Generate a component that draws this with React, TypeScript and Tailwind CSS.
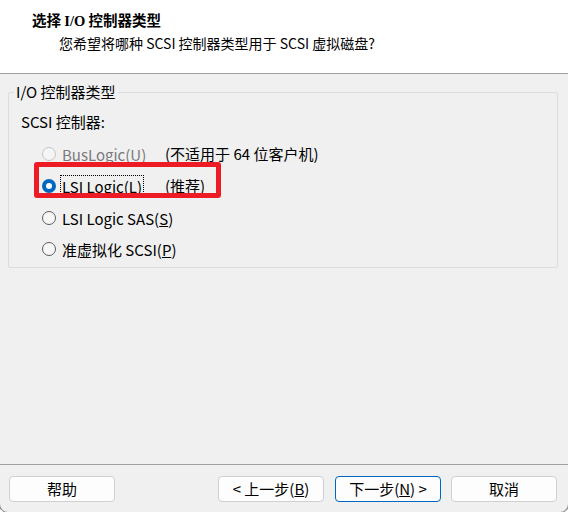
import type { ReactNode } from "react";

const font = "font-['Noto_Sans_CJK_SC','Noto_Sans',sans-serif]";

type Option = {
  label: ReactNode;
  note?: string;
  checked?: boolean;
  disabled?: boolean;
  focused?: boolean;
  rowClass: string;
};

const options: Option[] = [
  {
    label: (
      <>
        BusLogic(<span className="underline">U</span>)
      </>
    ),
    note: "(不适用于 64 位客户机)",
    disabled: true,
    rowClass: "h-8",
  },
  {
    label: (
      <>
        LSI Logic(<span className="underline">L</span>)
      </>
    ),
    note: "(推荐)",
    checked: true,
    focused: true,
    rowClass: "h-8",
  },
  {
    label: (
      <>
        LSI Logic SAS(<span className="underline">S</span>)
      </>
    ),
    rowClass: "h-8",
  },
  {
    label: (
      <>
        准虚拟化 SCSI(<span className="underline">P</span>)
      </>
    ),
    rowClass: "h-[30px]",
  },
];

function Radio({ checked, disabled }: { checked?: boolean; disabled?: boolean }) {
  if (checked) {
    return (
      <span className="flex h-[14px] w-[14px] shrink-0 items-center justify-center rounded-full bg-[#0067c0]">
        <span className="h-[6px] w-[6px] rounded-full bg-white" />
      </span>
    );
  }
  return (
    <span
      className={
        disabled
          ? "h-[14px] w-[14px] shrink-0 rounded-full border border-[#c5c5c5] bg-[#f5f5f5]"
          : "h-[14px] w-[14px] shrink-0 rounded-full border border-[#5d5d5d] bg-[#f7f7f7]"
      }
    />
  );
}

function Button({ children, primary, className }: { children: ReactNode; primary?: boolean; className?: string }) {
  return (
    <button
      className={`flex h-[26px] w-[106px] items-center justify-center rounded-[4px] border bg-[#fdfdfd] text-[15px] text-black ${
        primary ? "border-[#0067c0]" : "border-[#d0d0d0]"
      } ${className ?? ""}`}
    >
      {children}
    </button>
  );
}

export default function App() {
  return (
    <div className={`relative h-[512px] w-[568px] overflow-hidden bg-white ${font}`}>
      <div className="-ml-px flex h-[513px] w-[570px] flex-col rounded-b-[9px] border border-t-0 border-[#8a8a8a] bg-[#f0f0f0]">
        {/* header */}
        <div className="h-[73px] bg-white pl-[32px] pt-[9px]">
          <p className="text-[14.5px] font-bold leading-[22px] text-black">
            选择 <span className="font-['Liberation_Serif',serif]">I/O</span> 控制器类型
          </p>
          <p className="pl-[27px] text-[14px] leading-[22px] text-black">
            您希望将哪种 SCSI 控制器类型用于 SCSI 虚拟磁盘?
          </p>
        </div>
        <div className="h-px bg-[#a0a0a0]" />

        {/* body */}
        <div className="flex-1 pl-[8px] pt-[8px]">
          <fieldset className="h-[186px] w-[550px] rounded-[2px] border border-[#dcdcdc] pl-[12px]">
            <legend className="ml-[-7px] px-[2px] text-[15px] leading-[20px] text-black">I/O 控制器类型</legend>
            <p className="mt-[10px] text-[15px] leading-[20px] text-black">SCSI 控制器:</p>
            <div className="mt-[6px] flex flex-col pl-[21px]">
              {options.map((o, i) => (
                <div key={i} className={`flex items-center ${o.rowClass}`}>
                  <Radio checked={o.checked} disabled={o.disabled} />
                  <div className="w-[109px] shrink-0 pl-[4px]">
                    <span
                      className={`whitespace-nowrap border px-[1px] text-[15px] leading-[16px] ${
                        o.focused ? "border-dotted border-black" : "border-transparent"
                      } ${o.disabled ? "text-[#7a7a7a]" : "text-black"}`}
                    >
                      {o.label}
                    </span>
                  </div>
                  {o.note && <span className="whitespace-nowrap text-[15px] text-black">{o.note}</span>}
                </div>
              ))}
            </div>
          </fieldset>
        </div>

        {/* footer */}
        <div className="h-px bg-[#a0a0a0]" />
        <div className="flex h-[47px] items-start pl-[9px] pr-[11px] pt-[11px]">
          <Button>帮助</Button>
          <div className="ml-auto flex gap-[10px]">
            <div className="flex gap-[11px]">
              <Button className="w-[105px]">
                &lt; 上一步(<span className="underline">B</span>)
              </Button>
              <Button primary>
                下一步(<span className="underline">N</span>) &gt;
              </Button>
            </div>
            <Button>取消</Button>
          </div>
        </div>
      </div>

      {/* red annotation */}
      <div className="absolute left-[34px] top-[162px] h-[36px] w-[187px] rounded-[3px] border-[5px] border-[#ed1c24]" />
    </div>
  );
}
